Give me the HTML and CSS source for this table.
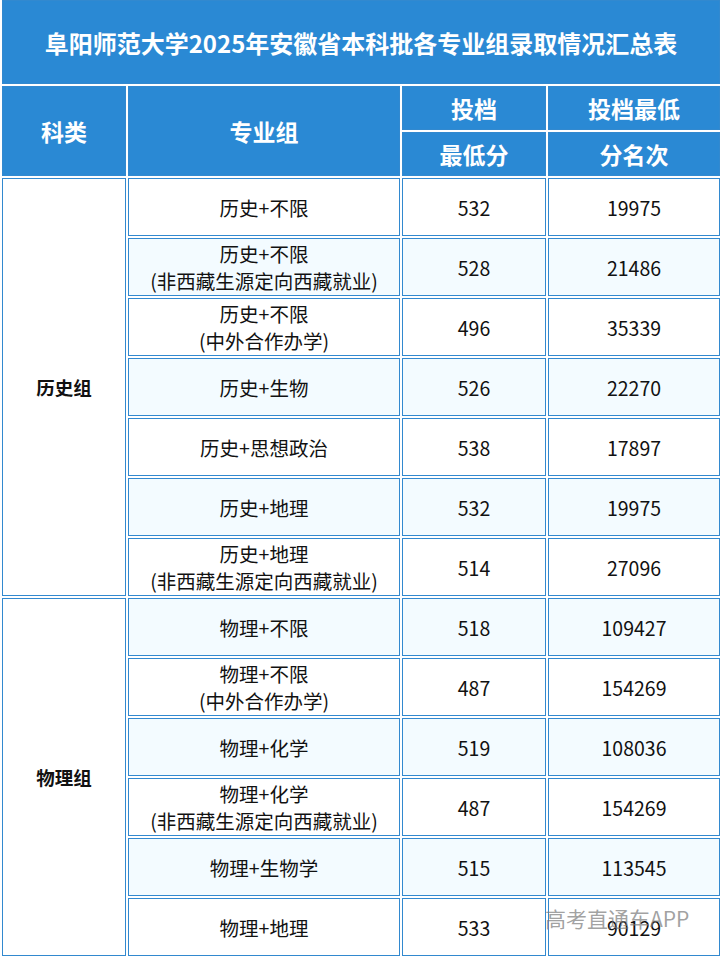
FILE: index.html
```html
<!DOCTYPE html>
<html lang="zh">
<head>
<meta charset="utf-8">
<link rel="stylesheet" href="styles.css">
</head>
<body>
<div class="page">
<table class="grid">
  <colgroup>
    <col class="c1"><col class="c2"><col class="c3"><col class="c4">
  </colgroup>
  <tr class="title-row"><td colspan="4" class="title">阜阳师范大学2025年安徽省本科批各专业组录取情况汇总表</td></tr>
  <tr class="head-row">
    <td rowspan="2" class="head">科类</td>
    <td rowspan="2" class="head">专业组</td>
    <td class="head">投档</td>
    <td class="head">投档最低</td>
  </tr>
  <tr class="head-row">
    <td class="head">最低分</td>
    <td class="head">分名次</td>
  </tr>
  <tr class="row">
    <td rowspan="7" class="cat">历史组</td>
    <td>历史+不限</td><td>532</td><td>19975</td>
  </tr>
  <tr class="row alt"><td>历史+不限<br>(非西藏生源定向西藏就业)</td><td>528</td><td>21486</td></tr>
  <tr class="row"><td>历史+不限<br>(中外合作办学)</td><td>496</td><td>35339</td></tr>
  <tr class="row alt"><td>历史+生物</td><td>526</td><td>22270</td></tr>
  <tr class="row"><td>历史+思想政治</td><td>538</td><td>17897</td></tr>
  <tr class="row alt"><td>历史+地理</td><td>532</td><td>19975</td></tr>
  <tr class="row"><td>历史+地理<br>(非西藏生源定向西藏就业)</td><td>514</td><td>27096</td></tr>
  <tr class="row alt">
    <td rowspan="6" class="cat">物理组</td>
    <td>物理+不限</td><td>518</td><td>109427</td>
  </tr>
  <tr class="row"><td>物理+不限<br>(中外合作办学)</td><td>487</td><td>154269</td></tr>
  <tr class="row alt"><td>物理+化学</td><td>519</td><td>108036</td></tr>
  <tr class="row"><td>物理+化学<br>(非西藏生源定向西藏就业)</td><td>487</td><td>154269</td></tr>
  <tr class="row alt"><td>物理+生物学</td><td>515</td><td>113545</td></tr>
  <tr class="row"><td>物理+地理</td><td>533</td><td>90129</td></tr>
</table>
<div class="watermark">高考直通车APP</div>
</div>
</body>
</html>
```

FILE: styles.css
```css
html, body {
  margin: 0;
  padding: 0;
  background: #ffffff;
}
.page {
  position: relative;
  width: 722px;
  height: 959px;
  overflow: hidden;
}
.grid {
  border-collapse: separate;
  border-spacing: 2px;
  width: 722px;
  table-layout: fixed;
  margin-top: -2px;
  font-family: "Noto Sans CJK SC", "Microsoft YaHei", sans-serif;
}
.c1 { width: 124px; }
.c2 { width: 272px; }
.c3 { width: 144px; }
.c4 { width: 172px; }
.grid td {
  box-sizing: border-box;
  border: 1px solid #3289cf;
  padding: 0;
  text-align: center;
  vertical-align: middle;
  color: #111;
  font-size: 19.5px;
  line-height: 27px;
}
.title-row td {
  height: 84px;
}
.grid td.title {
  background: #2a89d4;
  color: #fff;
  font-weight: 700;
  font-size: 24px;
}
.head-row td {
  height: 44px;
}
.grid td.head {
  background: #2a89d4;
  color: #fff;
  font-weight: 700;
  font-size: 23px;
}
.row td {
  height: 58px;
}
.row.alt td {
  background: #f3fbff;
}
.grid td.cat {
  background: #ffffff;
  font-weight: 700;
  font-size: 18.5px;
}
.watermark {
  position: absolute;
  left: 545px;
  top: 903px;
  font-family: "Noto Sans CJK SC", sans-serif;
  font-size: 21px;
  color: rgba(120, 120, 120, 0.7);
  white-space: nowrap;
}
```
